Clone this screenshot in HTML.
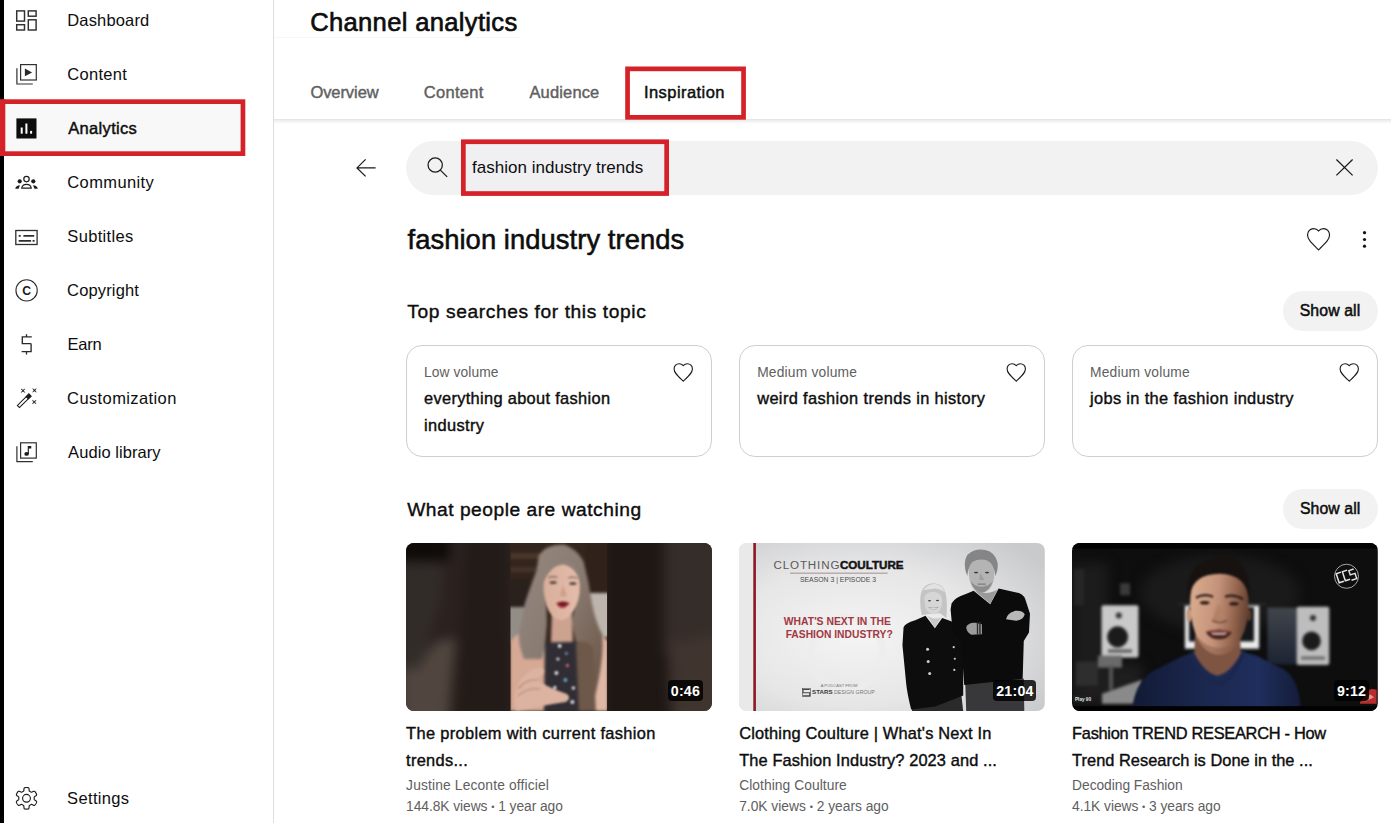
<!DOCTYPE html>
<html lang="en">
<head>
<meta charset="utf-8">
<title>Channel analytics</title>
<style>
html,body{margin:0;padding:0;}
body{width:1391px;height:823px;position:relative;overflow:hidden;background:#fff;
 font-family:"Liberation Sans",sans-serif;color:#0d0d0d;}
.t{position:absolute;line-height:1;white-space:pre;}
.abs{position:absolute;}
.redbox{position:absolute;box-sizing:border-box;border:4.6px solid #d52128;}
.card{position:absolute;box-sizing:border-box;top:345px;width:306px;height:112px;border:1px solid #cfcfcf;border-radius:16px;background:#fff;}
.pill{position:absolute;background:#f2f2f2;border-radius:20px;}
.thumb{position:absolute;top:542.6px;width:305.8px;height:168px;border-radius:8px;overflow:hidden;}
.thumb svg{display:block;width:100%;height:100%;}
.badge{position:absolute;box-sizing:border-box;height:21.3px;border-radius:4px;background:rgba(0,0,0,.82);color:#fff;font-weight:700;font-size:14.2px;letter-spacing:.2px;line-height:1;}
.badge b{position:absolute;top:3.7px;font-weight:700;white-space:pre;}
svg{overflow:visible;}
</style>
</head>
<body>
<!-- left black strip -->
<div class="abs" style="left:0;top:0;width:4px;height:823px;background:#000"></div>
<!-- sidebar divider -->
<div class="abs" style="left:273px;top:0;width:1px;height:823px;background:#dedede"></div>
<!-- selected row background -->
<div class="abs" style="left:4px;top:101px;width:240px;height:54px;background:#f8f8f8"></div>
<!-- header faint line -->
<div class="abs" style="left:274px;top:37px;width:246px;height:1px;background:#f6f6f6"></div>
<!-- tab bar shadow -->
<div class="abs" style="left:274px;top:119px;width:1117px;height:5px;background:linear-gradient(#e2e2e2,#f3f3f3 45%,#fff)"></div>

<!-- search pill -->
<div class="abs" style="left:406px;top:141px;width:972px;height:54px;border-radius:27px;background:#f2f2f2"></div>

<!-- red annotation boxes: drawn in the svg overlay below -->

<!-- show all pills -->
<div class="pill" style="left:1283.3px;top:291px;width:95.2px;height:39.7px"></div>
<div class="pill" style="left:1283.3px;top:489.3px;width:95.2px;height:39.7px"></div>

<!-- cards -->
<div class="card" style="left:406px"></div>
<div class="card" style="left:739.2px"></div>
<div class="card" style="left:1072px"></div>

<!-- all icons in one overlay svg -->
<svg class="abs" style="left:0;top:0" width="1391" height="823" viewBox="0 0 1391 823" fill="none" stroke="#303030" stroke-width="1.45">
 <!-- red annotation boxes -->
 <g stroke="#d52128" stroke-width="4.7" fill="none">
  <rect x="2.35" y="101.65" width="240.6" height="52"/>
  <rect x="0" y="99.3" width="5.3" height="56.7" fill="#d52128" stroke="none"/>
  <rect x="627.55" y="68.85" width="116" height="48.5"/>
  <rect x="463.35" y="141.75" width="203.3" height="51.8" fill="#f0f0f2"/>
 </g>
 <!-- dashboard -->
 <g>
  <rect x="16.7" y="10.9" width="7.8" height="10.2"/>
  <rect x="16.7" y="24.7" width="7.8" height="5.3"/>
  <rect x="28.3" y="10.9" width="7.8" height="5.3"/>
  <rect x="28.3" y="19.8" width="7.8" height="10.2"/>
 </g>
 <!-- content -->
 <g stroke-width="1.2">
  <rect x="20.6" y="64.6" width="15.7" height="15.4"/>
  <path d="M16.9 68.2V84H32.8"/>
  <path d="M24.9 68.6L32.1 72.4L24.9 76.2Z" fill="#2a2a2a" stroke="none"/>
 </g>
 <!-- analytics -->
 <g stroke="none">
  <rect x="16.4" y="118.4" width="20.1" height="20.1" fill="#0d0d0d"/>
  <rect x="20.7" y="127.5" width="2" height="6.2" fill="#fff"/>
  <rect x="25.4" y="123.5" width="2" height="10.2" fill="#fff"/>
  <rect x="30.1" y="130.9" width="2" height="2.8" fill="#fff"/>
 </g>
 <!-- community -->
 <g stroke="#1c1c1c" stroke-width="1.2">
  <circle cx="26.5" cy="179.1" r="2.7"/>
  <path d="M21.7 188.2C22.2 185.6 24 184.4 26.5 184.4C29 184.4 30.8 185.6 31.3 188.2Z" stroke-linejoin="round"/>
  <circle cx="19.7" cy="181.3" r="2.1" fill="#1c1c1c" stroke="none"/>
  <circle cx="33.3" cy="181.3" r="2.1" fill="#1c1c1c" stroke="none"/>
  <path d="M15.2 188.8C15.6 186.6 17.4 185.3 19.9 185.2L18.6 188.8Z" fill="#1c1c1c" stroke="none"/>
  <path d="M37.8 188.8C37.4 186.6 35.6 185.3 33.1 185.2L34.4 188.8Z" fill="#1c1c1c" stroke="none"/>
 </g>
 <!-- subtitles -->
 <g stroke="#2e2e2e">
  <rect x="15.8" y="230.5" width="21.3" height="14" stroke-width="1.3"/>
  <path d="M18.7 235.8H20.7M23.4 235.8H34.2M18.7 240.9H31.1M32.6 240.9H34.6" stroke-width="1.7"/>
 </g>
 <!-- copyright -->
 <g stroke="#2a2a2a" stroke-width="1.1">
  <circle cx="26.6" cy="290.4" r="10.65"/>
  <text x="26.6" y="294.75" text-anchor="middle" font-family="Liberation Sans, sans-serif" font-weight="700" font-size="12.2" fill="#1a1a1a" stroke="none">C</text>
 </g>
 <!-- earn -->
 <g stroke="#2a2a2a" stroke-width="1.35">
  <path d="M31.8 336.9H22.3V343.6H30.3Q31.1 343.6 31.1 344.4V351.6H21.6M26.5 334.2V336.9M26.5 351.6V354.6"/>
 </g>
 <!-- customization -->
 <g stroke="#1c1c1c" stroke-width="1.05">
  <g transform="translate(18.75 406.1) rotate(-44.6)">
   <rect x="-0.5" y="-1.5" width="16.2" height="3"/>
   <rect x="11.9" y="-1.5" width="3.8" height="3" fill="#1c1c1c"/>
  </g>
  <g fill="#1c1c1c" stroke="#1c1c1c" stroke-width="0.5" stroke-linejoin="round">
   <path d="M24.77 392.47L23.00 391.25L21.23 392.47L22.45 390.70L21.23 388.93L23.00 390.15L24.77 388.93L23.55 390.70Z"/>
   <path d="M36.27 392.17L34.50 390.95L32.73 392.17L33.95 390.40L32.73 388.63L34.50 389.85L36.27 388.63L35.05 390.40Z"/>
   <path d="M35.97 403.77L34.20 402.55L32.43 403.77L33.65 402.00L32.43 400.23L34.20 401.45L35.97 400.23L34.75 402.00Z"/>
  </g>
 </g>
 <!-- audio library -->
 <g stroke-width="1.2">
  <rect x="20.6" y="442.8" width="15.7" height="15.3"/>
  <path d="M16.9 446.3V461.7H32.8"/>
  <ellipse cx="26.6" cy="453.9" rx="2.3" ry="1.95" fill="#1c1c1c" stroke="none"/>
  <path d="M28.3 454V446.5H30.7V447.9H28.3" fill="#1c1c1c" stroke="#1c1c1c" stroke-width="1.1" stroke-linejoin="miter"/>
 </g>
 <!-- settings -->
 <g stroke="#1e1e1e" stroke-width="1.15" stroke-linejoin="round">
  <path d="M34.21 798.30 L34.20 798.03 L34.20 797.76 L34.19 797.49 L34.21 797.22 L34.33 796.92 L34.73 796.55 L35.55 796.04 L36.31 795.49 L36.60 795.02 L36.60 794.62 L36.50 794.26 L36.36 793.91 L36.21 793.57 L36.04 793.23 L35.86 792.90 L35.66 792.58 L35.45 792.26 L35.23 791.95 L35.00 791.66 L34.73 791.39 L34.39 791.20 L33.84 791.21 L32.98 791.59 L32.13 792.05 L31.61 792.21 L31.29 792.17 L31.04 792.04 L30.81 791.90 L30.58 791.76 L30.35 791.63 L30.12 791.49 L29.88 791.37 L29.64 791.24 L29.42 791.08 L29.22 790.83 L29.10 790.30 L29.07 789.33 L28.97 788.40 L28.71 787.91 L28.37 787.72 L28.00 787.62 L27.63 787.56 L27.25 787.53 L26.88 787.50 L26.50 787.50 L26.12 787.50 L25.75 787.53 L25.37 787.56 L25.00 787.62 L24.63 787.72 L24.29 787.91 L24.03 788.40 L23.93 789.33 L23.90 790.30 L23.78 790.83 L23.58 791.08 L23.36 791.24 L23.12 791.37 L22.88 791.49 L22.65 791.63 L22.42 791.76 L22.19 791.90 L21.96 792.04 L21.71 792.17 L21.39 792.21 L20.87 792.05 L20.02 791.59 L19.16 791.21 L18.61 791.20 L18.27 791.39 L18.00 791.66 L17.77 791.95 L17.55 792.26 L17.34 792.58 L17.14 792.90 L16.96 793.23 L16.79 793.57 L16.64 793.91 L16.50 794.26 L16.40 794.62 L16.40 795.02 L16.69 795.49 L17.45 796.04 L18.27 796.55 L18.67 796.92 L18.79 797.22 L18.81 797.49 L18.80 797.76 L18.80 798.03 L18.79 798.30 L18.80 798.57 L18.80 798.84 L18.81 799.11 L18.79 799.38 L18.67 799.68 L18.27 800.05 L17.45 800.56 L16.69 801.11 L16.40 801.58 L16.40 801.98 L16.50 802.34 L16.64 802.69 L16.79 803.03 L16.96 803.37 L17.14 803.70 L17.34 804.02 L17.55 804.34 L17.77 804.65 L18.00 804.94 L18.27 805.21 L18.61 805.40 L19.16 805.39 L20.02 805.01 L20.87 804.55 L21.39 804.39 L21.71 804.43 L21.96 804.56 L22.19 804.70 L22.42 804.84 L22.65 804.97 L22.88 805.11 L23.12 805.23 L23.36 805.36 L23.58 805.52 L23.78 805.77 L23.90 806.30 L23.93 807.27 L24.03 808.20 L24.29 808.69 L24.63 808.88 L25.00 808.98 L25.37 809.04 L25.75 809.07 L26.12 809.10 L26.50 809.10 L26.88 809.10 L27.25 809.07 L27.63 809.04 L28.00 808.98 L28.37 808.88 L28.71 808.69 L28.97 808.20 L29.07 807.27 L29.10 806.30 L29.22 805.77 L29.42 805.52 L29.64 805.36 L29.88 805.23 L30.12 805.11 L30.35 804.97 L30.58 804.84 L30.81 804.70 L31.04 804.56 L31.29 804.43 L31.61 804.39 L32.13 804.55 L32.98 805.01 L33.84 805.39 L34.39 805.40 L34.73 805.21 L35.00 804.94 L35.23 804.65 L35.45 804.34 L35.66 804.02 L35.86 803.70 L36.04 803.37 L36.21 803.03 L36.36 802.69 L36.50 802.34 L36.60 801.98 L36.60 801.58 L36.31 801.11 L35.55 800.56 L34.73 800.05 L34.33 799.68 L34.21 799.38 L34.19 799.11 L34.20 798.84 L34.20 798.57Z"/>
  <circle cx="26.5" cy="798.3" r="3.9"/>
 </g>
 <!-- back arrow -->
 <path d="M375.6 167.9H356.6M365.6 159.4L357 167.9L365.6 176.4" stroke="#1a1a1a" stroke-width="1.25"/>
 <!-- search icon -->
 <g stroke="#1a1a1a" stroke-width="1.25">
  <circle cx="435.2" cy="165" r="7.15"/>
  <path d="M440.3 170.1L447.2 176.9"/>
 </g>
 <!-- clear X -->
 <path d="M1336.4 159.5L1352.6 175.4M1352.6 159.5L1336.4 175.4" stroke="#1a1a1a" stroke-width="1.25"/>
 <!-- big heart -->
 <g stroke="#1a1a1a" stroke-width="1.15">
  <path transform="translate(1307.55 228.55) scale(1.1 1.16) translate(-2 -3)" vector-effect="non-scaling-stroke" d="M12 21.35l-1.45-1.32C5.4 15.36 2 12.28 2 8.5 2 5.42 4.42 3 7.5 3c1.74 0 3.41.81 4.5 2.09C13.09 3.81 14.76 3 16.5 3 19.58 3 22 5.42 22 8.5c0 3.78-3.4 6.86-8.55 11.54L12 21.35z"/>
 </g>
 <!-- kebab -->
 <g fill="#111" stroke="none">
  <circle cx="1364.5" cy="232.7" r="1.6"/><circle cx="1364.5" cy="239.5" r="1.6"/><circle cx="1364.5" cy="246.2" r="1.6"/>
 </g>
 <!-- card hearts -->
 <g stroke="#1a1a1a" stroke-width="1.1">
  <path id="h" transform="translate(674.1 363.7) scale(0.915 0.95) translate(-2 -3)" vector-effect="non-scaling-stroke" d="M12 21.35l-1.45-1.32C5.4 15.36 2 12.28 2 8.5 2 5.42 4.42 3 7.5 3c1.74 0 3.41.81 4.5 2.09C13.09 3.81 14.76 3 16.5 3 19.58 3 22 5.42 22 8.5c0 3.78-3.4 6.86-8.55 11.54L12 21.35z"/>
  <path transform="translate(1007.1 363.7) scale(0.915 0.95) translate(-2 -3)" vector-effect="non-scaling-stroke" d="M12 21.35l-1.45-1.32C5.4 15.36 2 12.28 2 8.5 2 5.42 4.42 3 7.5 3c1.74 0 3.41.81 4.5 2.09C13.09 3.81 14.76 3 16.5 3 19.58 3 22 5.42 22 8.5c0 3.78-3.4 6.86-8.55 11.54L12 21.35z"/>
  <path transform="translate(1340.1 363.7) scale(0.915 0.95) translate(-2 -3)" vector-effect="non-scaling-stroke" d="M12 21.35l-1.45-1.32C5.4 15.36 2 12.28 2 8.5 2 5.42 4.42 3 7.5 3c1.74 0 3.41.81 4.5 2.09C13.09 3.81 14.76 3 16.5 3 19.58 3 22 5.42 22 8.5c0 3.78-3.4 6.86-8.55 11.54L12 21.35z"/>
 </g>
</svg>

<!-- thumbnails -->
<div class="thumb" style="left:406.1px"><svg viewBox="0 0 306 168" preserveAspectRatio="none">
<defs>
 <filter color-interpolation-filters="sRGB" id="b6" x="-20%" y="-20%" width="140%" height="140%"><feGaussianBlur stdDeviation="6"/></filter>
 <filter color-interpolation-filters="sRGB" id="b3" x="-20%" y="-20%" width="140%" height="140%"><feGaussianBlur stdDeviation="1.6"/></filter>
 <filter color-interpolation-filters="sRGB" id="b1" x="-20%" y="-20%" width="140%" height="140%"><feGaussianBlur stdDeviation="0.8"/></filter>
 <clipPath id="cp1"><rect x="104.6" y="0" width="96.6" height="168"/></clipPath>
 <linearGradient id="hairg" x1="0" y1="0" x2="1" y2="1"><stop offset="0" stop-color="#958880"/><stop offset="0.45" stop-color="#8a7b72"/><stop offset="1" stop-color="#66503f"/></linearGradient>
 <linearGradient id="skin1" x1="0" y1="0" x2="1" y2="0"><stop offset="0" stop-color="#d9af9b"/><stop offset="1" stop-color="#e3bcab"/></linearGradient>
</defs>
<rect width="306" height="168" fill="#2a2320"/>
<!-- blurred sides -->
<g filter="url(#b6)">
 <rect x="-10" y="20" width="46" height="110" fill="#322c29"/>
 <path d="M43 -10L108 -10L108 180L15 180L23 91L34 60Z" fill="#2b2220"/>
 <path d="M60 -10L100 -10L104 180L50 180Z" fill="#231b18"/>
 <rect x="-12" y="-12" width="56" height="30" fill="#0f0b09"/>
 <path d="M33 98L50 96L46 130L42 180L-5 180L-5 125L12 126L25 105Z" fill="#51463f"/>
 <path d="M200 -10L258 -10L262 180L200 180Z" fill="#1e1714"/>
 <rect x="258" y="-10" width="60" height="120" fill="#342d29"/>
 <path d="M262 100L320 90L320 180L268 180Z" fill="#40342e"/>
</g>
<!-- center panel -->
<g clip-path="url(#cp1)">
 <rect x="104" y="0" width="98" height="168" fill="#35261e"/>
 <g filter="url(#b3)">
  <rect x="100" y="-5" width="105" height="58" fill="#33241c"/>
  <rect x="104" y="10" width="30" height="6" fill="#4a372b"/>
  <rect x="104" y="24" width="28" height="5" fill="#453328"/>
  <rect x="100" y="64" width="24" height="36" fill="#938d88"/>
  <rect x="100" y="36" width="24" height="28" fill="#2a211d"/>
  <rect x="184" y="50" width="22" height="44" fill="#bdb5ae"/>
  <rect x="180" y="-5" width="25" height="52" fill="#30221b"/>
  <!-- arms / shoulders -->
  <path d="M104 168L104 101Q108 92 114 90.5Q124 90 132 96L141 104L138 168Z" fill="#d6a994"/>
  <path d="M202 168L202 98Q198 92 190 93L176 100L180 168Z" fill="#e0b7a5"/>
  <!-- neck -->
  <path d="M146 70L166 70L167 100L145 100Z" fill="#cda390"/>
  <!-- hair mass -->
  <path d="M133 12Q140 1 158 1.5Q171 6 177.5 18Q183 38 186 60Q190 80 196.5 92Q198 112 192 140L186 168L172 168L170 100L166 80L172 40L150 22L140 40L141 80L139 104L136 116L118 116Q112 100 113 90Q116 76 119 60Q125 42 130.5 28Z" fill="url(#hairg)"/>
  <!-- dress -->
  <path d="M139 99.5L172.5 98.8L175 168L138 168Z" fill="#302e34"/>
  <path d="M170 100Q180 96 187 104L190 168L173 168Z" fill="#6d5849"/>
 </g>
 <g filter="url(#b1)">
  <!-- face -->
  <path d="M137.5 40Q138 21 155 20.5Q173 21 174 42Q174.5 58 167 69Q161 77 155.5 77Q149 77 143.5 69Q137 58 137.5 40Z" fill="url(#skin1)"/>
  <path d="M137 42Q138 18 156 17.5Q174 19 174.5 42Q171 24 157 21.5Q143 23 137 42Z" fill="#8f8078"/>
  <ellipse cx="147.2" cy="39.6" rx="3.6" ry="1.5" fill="#5b4a44"/>
  <ellipse cx="167" cy="40.4" rx="3.6" ry="1.5" fill="#5b4a44"/>
  <path d="M142.5 34.8Q147 32.6 151.5 34.6M162.5 35Q167 33 171.5 35.6" stroke="#7a6257" stroke-width="1.1" fill="none"/>
  <path d="M157 42L154 52.5Q157.5 55 161 52.5Z" fill="#cf9f8c"/>
  <path d="M150.3 60Q157 56.5 164 60Q160 65.2 156.5 65Q152.5 65 150.3 60Z" fill="#a62d3c"/>
  <ellipse cx="157" cy="61" rx="4" ry="1.3" fill="#4c1a1f"/>
  <!-- hand -->
  <path d="M108.5 156Q109 140 120 131Q127 124 134 124.5Q140 126 137 131L130 137Q146 146 161 151Q166 155 160 159Q140 162 126 165L110 168Z" fill="#dbb3a0"/>
  <path d="M112 146Q120 136 131 137M112 153Q122 144 134 146" stroke="#bb907d" stroke-width="1.3" fill="none"/>
  <!-- stars on dress -->
  <g fill="#dadae2">
   <circle cx="153.8" cy="103" r="2"/><circle cx="152" cy="116" r="1.6"/><circle cx="150.5" cy="130" r="2"/>
   <circle cx="149" cy="144.5" r="1.7"/><circle cx="167.5" cy="145" r="1.8"/><circle cx="166.5" cy="159" r="2"/>
  </g>
  <circle cx="161.5" cy="122.5" r="1.8" fill="#c0607a"/><circle cx="159.5" cy="137" r="1.9" fill="#6aa0c8"/><circle cx="160.5" cy="110.5" r="1.4" fill="#7a8ec0"/>
 </g>
</g>
</svg></div>
<div class="thumb" style="left:739.2px"><svg viewBox="0 0 305.5 167.5" preserveAspectRatio="none" font-family="Liberation Sans, sans-serif">
<defs>
 <radialGradient id="bg2" cx="0.38" cy="0.55" r="0.75"><stop offset="0" stop-color="#f4f4f4"/><stop offset="0.55" stop-color="#e6e6e7"/><stop offset="1" stop-color="#c9cacc"/></radialGradient>
 <filter color-interpolation-filters="sRGB" id="c1" x="-20%" y="-20%" width="140%" height="140%"><feGaussianBlur stdDeviation="0.7"/></filter>
 <filter color-interpolation-filters="sRGB" id="c2" x="-20%" y="-20%" width="140%" height="140%"><feGaussianBlur stdDeviation="1.6"/></filter>
</defs>
<rect width="305.5" height="167.5" fill="url(#bg2)"/>
<rect x="0" y="0" width="14.5" height="167.5" fill="#e9e9ea"/>
<rect x="14.3" y="0" width="2.6" height="167.5" fill="#8a1b25"/>
<circle cx="108" cy="110" r="36" fill="none" stroke="#ececec" stroke-width="7" opacity=".8"/>
<text x="34.4" y="25.6" font-size="11.6" fill="#5a5a5a" textLength="66" lengthAdjust="spacing">CLOTHING</text>
<text x="100.8" y="25.6" font-size="11.6" font-weight="700" fill="#151515" textLength="63.6" lengthAdjust="spacing" stroke="#151515" stroke-width=".5">COULTURE</text>
<rect x="51" y="29.6" width="97.5" height="0.9" fill="#a08388"/>
<text x="60.9" y="39.2" font-size="7.4" fill="#4a4a4a" textLength="76" lengthAdjust="spacingAndGlyphs">SEASON 3 | EPISODE 3</text>
<text x="44.8" y="81.7" font-size="11.1" font-weight="700" fill="#a23842" textLength="107" lengthAdjust="spacingAndGlyphs">WHAT'S NEXT IN THE</text>
<text x="46.6" y="94.4" font-size="11.1" font-weight="700" fill="#a23842" textLength="107" lengthAdjust="spacingAndGlyphs">FASHION INDUSTRY?</text>
<text x="81.6" y="143.4" font-size="3.7" fill="#777" textLength="36.8" lengthAdjust="spacingAndGlyphs">A PODCAST FROM</text>
<g fill="none" stroke="#444" stroke-width="1"><path d="M70.6 146H64V149.2H70.6V152.4H64"/><rect x="63.3" y="145.2" width="8" height="8" stroke-width=".6"/></g>
<text x="73" y="150.9" font-size="5" font-weight="700" fill="#3a3a3a" textLength="20.5" lengthAdjust="spacingAndGlyphs">STARS</text>
<text x="95" y="150.9" font-size="5" fill="#777" textLength="40.6" lengthAdjust="spacingAndGlyphs">DESIGN GROUP</text>
<!-- people -->
<g filter="url(#c1)">
 <!-- man pants -->
 <path d="M226 139L284.5 135L285 168L227 168Z" fill="#38383a"/>
 <!-- woman pants -->
 <path d="M172 160L222 150L224 168L173 168Z" fill="#2a2a2b"/>
 <!-- woman jacket -->
 <path d="M164.4 84Q166 80 176 77L186.3 72.6L195.7 85L203 74.7L212 78L224 90L224 152L196 163L172 166Q168 150 167 140L163.3 102Z" fill="#0d0d0e"/>
 <!-- man sweater -->
 <path d="M212.4 60Q216 54 226 51L234.4 47.5L251 61L259.4 45.4L276 49Q284 50 286 56L290.7 70.5L289.7 89.3L284.5 97.7L283.4 135.3L225 141.5L221.8 97.7L213.5 89.3L211.4 66.3Z" fill="#0b0b0c"/>
 <!-- woman hair -->
 <path d="M182.5 72Q179.5 56 182.5 48Q186 40 195 40.2Q204 41 206.5 50Q208.5 60 207.2 74.7L201 70L188 71Z" fill="#c4c4c4"/>
 <path d="M184 47Q189 40.5 196 41Q203 42 205.5 49Q200 45 194 45.5Q188 46 184 47Z" fill="#e2e2e2"/>
 <!-- woman face -->
 <path d="M185 56Q185.5 49 194 48.6Q202.5 49 203 57Q203 65 199 69Q196 71.5 193.5 71Q189.5 70 186.5 65Z" fill="#d6d6d6"/>
 <path d="M189.5 64.2Q194 68.2 199 64Q194 65.6 189.5 64.2Z" fill="#fff" stroke="#8a8a8a" stroke-width=".5"/>
 <ellipse cx="190.3" cy="57.6" rx="1.6" ry=".7" fill="#4a4a4a"/><ellipse cx="198.3" cy="57.4" rx="1.6" ry=".7" fill="#4a4a4a"/>
 <path d="M188 72.5L195.7 84.5L202 74Q195 77 188 72.5Z" fill="#c9c9c9"/>
 <!-- man head -->
 <path d="M229.5 30Q229 16 241 14.5Q254 15 255 30Q255.5 40 250 46Q246 50 242 49.6Q236 49 232.5 43Q229.5 37 229.5 30Z" fill="#b4b4b4"/>
 <path d="M228 33Q223 20 228 12Q236 5 246 7Q256 9 258.4 20Q259 27 256 33Q255 21 248 17.5Q240 15 233 19Q229 24 228 33Z" fill="#858585"/>
 <path d="M231.5 38Q234 48 242 49.6Q250 49 253.5 38Q250 43.5 242 43.5Q235 43.5 231.5 38Z" fill="#8d8d8d"/>
 <ellipse cx="236.8" cy="29.5" rx="2.2" ry=".8" fill="#3c3c3c"/><ellipse cx="247.8" cy="29.5" rx="2.2" ry=".8" fill="#3c3c3c"/>
 <path d="M241 30L240 37H245Z" fill="#9f9f9f"/>
 <path d="M238.5 41H246.5" stroke="#5a5a5a" stroke-width=".8"/>
 <path d="M235 47L251 60.5L258.5 46Q248 53 235 47Z" fill="#9a9a9a"/>
 <!-- hands -->
 <path d="M227 84Q229 79 236 79.5L242.7 81L242.7 91L232 91.4Q227.5 89 227 84Z" fill="#9c9c9c"/>
 <rect x="237.6" y="78.5" width="1.3" height="13" fill="#2a2a2a"/><rect x="240" y="78.5" width="1.4" height="13" fill="#2a2a2a"/>
 <path d="M266.7 76Q268 70 276 67.6Q283 67 285.5 71Q284 76.5 277 77.5Z" fill="#b8b8b8"/>
 <!-- buttons -->
 <g fill="#cdcdcd"><circle cx="188.4" cy="106" r="1.5"/><circle cx="189" cy="118.1" r="1.5"/><circle cx="190.5" cy="130.2" r="1.5"/><circle cx="214.5" cy="103.9" r="1.1"/><circle cx="215.6" cy="115.4" r="1.1"/><circle cx="215.1" cy="126.5" r="1.1"/></g>
</g>
</svg></div>
<div class="thumb" style="left:1072.1px"><svg viewBox="0 0 305.8 167.2" preserveAspectRatio="none" font-family="Liberation Sans, sans-serif">
<defs>
 <filter color-interpolation-filters="sRGB" id="d1" x="-20%" y="-20%" width="140%" height="140%"><feGaussianBlur stdDeviation="0.9"/></filter>
 <filter color-interpolation-filters="sRGB" id="d2" x="-20%" y="-20%" width="140%" height="140%"><feGaussianBlur stdDeviation="1.8"/></filter>
 <filter color-interpolation-filters="sRGB" id="d3" x="-30%" y="-30%" width="160%" height="160%"><feGaussianBlur stdDeviation="6"/></filter>
 <linearGradient id="face3" x1="0" y1="0" x2="1" y2="0.15"><stop offset="0" stop-color="#dcae90"/><stop offset="0.5" stop-color="#c4927a"/><stop offset="0.8" stop-color="#96664f"/><stop offset="1" stop-color="#6a4636"/></linearGradient>
 <linearGradient id="shirt3" x1="0" y1="0" x2="1" y2="0"><stop offset="0" stop-color="#121a35"/><stop offset="0.45" stop-color="#1b2850"/><stop offset="0.75" stop-color="#1f2e5c"/><stop offset="1" stop-color="#141c38"/></linearGradient>
 <linearGradient id="pan3" x1="0" y1="0" x2="0" y2="1"><stop offset="0" stop-color="#41454c"/><stop offset="1" stop-color="#1c2332"/></linearGradient>
</defs>
<rect width="305.8" height="167.2" fill="#0e0e0e"/>
<g filter="url(#d3)">
 <rect x="0" y="20" width="36" height="120" fill="#1c1c1c"/>
 <ellipse cx="148" cy="50" rx="80" ry="38" fill="#1a1a1a"/>
 <rect x="0" y="120" width="70" height="40" fill="#1e1e1e"/>
</g>
<g filter="url(#d2)">
 <!-- left speaker -->
 <rect x="29.5" y="62" width="37" height="52" rx="2" fill="#c9c9c9"/>
 <circle cx="45.6" cy="93.4" r="10.5" fill="#1b1b1b"/>
 <circle cx="46.8" cy="72.1" r="3" fill="#333"/>
 <rect x="36" y="106" width="24" height="3" fill="#555"/>
 <!-- right panel + speaker -->
 <rect x="195.4" y="64.3" width="30" height="56.5" fill="url(#pan3)"/>
 <rect x="224.7" y="63.5" width="32.6" height="58" rx="2" fill="#bdbdbd"/>
 <circle cx="239.5" cy="97.5" r="9.3" fill="#1b1b1b"/>
 <circle cx="241" cy="74.6" r="2.9" fill="#2c2c2c"/>
 <rect x="229" y="113" width="24" height="3" fill="#666"/>
 <!-- monitor -->
 <rect x="112.9" y="62.2" width="74.2" height="43" fill="#ececec"/>
 <rect x="117" y="64" width="65" height="34" fill="#14161a"/>
 <rect x="106" y="60" width="88" height="2" fill="#2a2a2a"/>
 <!-- lamp / desk -->
 <rect x="26" y="112" width="24" height="12" fill="#6a6a6a"/>
 <rect x="37" y="122" width="4" height="24" fill="#555"/>
 <path d="M30 150L70 136L70 160L30 160Z" fill="#8a8a8a"/>
 <rect x="4" y="118" width="22" height="24" fill="#2e2e2e"/>
 <rect x="48" y="40" width="10" height="12" fill="#3a3a3a"/>
 <rect x="2" y="26" width="10" height="36" fill="#262626"/>
</g>
<g filter="url(#d1)">
 <!-- shirt -->
 <path d="M60 168Q62 140 80 128L109.7 113L124 108Q146 122 168 108L184 112L212 126Q228 136 229 168Z" fill="url(#shirt3)"/>
 <!-- neck -->
  <path d="M123 92L168 92L169 110Q158 130 145.3 132Q133 130 122.3 110Z" fill="#7e5442"/>
 <path d="M121 107Q133 136 145.3 137.5Q158 136 170.5 106L174 109Q160 142 145.3 143Q131 142 118 110Z" fill="#1b274e"/>
 <!-- hair -->
 <path d="M117 56Q112 28 132 19Q146 12 162 17Q180 24 177.5 58Q172 36 148 34Q124 36 117 56Z" fill="#17120f"/>
 <ellipse cx="152" cy="22" rx="17" ry="8" fill="#17120f"/>
 <!-- face -->
 <path d="M118.5 52Q120 31 148 30.5Q175 31.5 176.5 56Q178 78 169 95Q160 111.5 146.5 111.3Q132 110 124 92Q116.5 72 118.5 52Z" fill="url(#face3)"/>
 <!-- ears -->
 <ellipse cx="117" cy="72" rx="2.6" ry="6.5" fill="#c99a7c"/>
 <ellipse cx="177.5" cy="72" rx="2" ry="6" fill="#5d3c2e"/>
 <!-- brows, eyes -->
 <path d="M124 54.5Q132 50 141 53.5M153 53.5Q162 50.5 171 56" stroke="#2a1d17" stroke-width="2.2" fill="none"/>
 <ellipse cx="132.7" cy="59.4" rx="4.8" ry="1.8" fill="#2b1e19"/><ellipse cx="162" cy="60.4" rx="4.8" ry="1.8" fill="#2b1e19"/>
 <!-- nose -->
 <path d="M146 60L140.5 76Q147 80.5 154.5 76Z" fill="#b38166"/>
 <path d="M140 77Q147.3 81.5 155 77" stroke="#6e4a3a" stroke-width="1.3" fill="none"/>
 <!-- mouth -->
 <path d="M133.8 88.5Q147 83.5 160 88.5Q156 96 147 96Q138 96 133.8 88.5Z" fill="#4a2420"/>
 <path d="M133.8 88.5Q140 85 147 87Q154 85 160 88.5Q147 89.5 133.8 88.5Z" fill="#8a4a40"/>
 <path d="M139 89.3Q147 90 155 89.3L153.5 91Q147 91.6 140.5 91Z" fill="#d8d0c8"/>
 <!-- stubble / jaw shadow -->
 <path d="M124 92Q132 110 146.5 111.3Q160 111.5 169 95Q160 104 146.5 104.5Q134 104 124 92Z" fill="#8a5f4a" opacity=".55"/>
</g>
<!-- logo -->
<g stroke="#e4e4e4" fill="none">
 <circle cx="274.5" cy="33.1" r="12" stroke-width=".7"/>
 <path d="M270.5 27.5H265.5V37H270.5M277 27.5H272V37H277M283.5 28.5H278.5V33H283.5V38.5H278" stroke-width="1.5" transform="rotate(-18 274.5 33.1)"/>
</g>
<!-- letterbox bars + label -->
<rect x="0" y="0" width="305.8" height="5.6" fill="#020202"/>
<rect x="0" y="162.4" width="305.8" height="5" fill="#020202"/>
<rect x="1.2" y="151.3" width="19.6" height="7.6" rx="1.2" fill="#1e1e1e"/>
<text x="3" y="157.1" font-size="4.7" font-weight="700" fill="#e0e0e0" textLength="16" lengthAdjust="spacingAndGlyphs">Play 90</text>
<!-- red corner -->
<path d="M288 158.5L296.5 147Q298 145 300.5 145.4L304.6 146V160H288Z" fill="#b92c2c"/>
<path d="M293 158L298 150.5L302 153.5Z" fill="#e8b0b0" opacity=".8"/>
</svg></div>

<!-- duration badges -->
<div class="badge" style="left:667.5px;top:680.1px;width:35.3px"><b style="left:3.3px">0:46</b></div>
<div class="badge" style="left:992.9px;top:680.2px;width:42.9px"><b style="left:3.4px">21:04</b></div>
<div class="badge" style="left:1333.6px;top:680.2px;width:35.3px"><b style="left:3.4px">9:12</b></div>

<span class="t" style="left:67.30px;top:11.93px;font-size:16.5px;letter-spacing:0.150px;color:#0d0d0d;">Dashboard</span>
<span class="t" style="left:67.30px;top:65.93px;font-size:16.5px;letter-spacing:0.283px;color:#0d0d0d;">Content</span>
<span class="t" style="left:68.30px;top:119.93px;font-size:16.5px;letter-spacing:0.312px;color:#0d0d0d;-webkit-text-stroke:0.45px #0d0d0d;">Analytics</span>
<span class="t" style="left:67.30px;top:173.93px;font-size:16.5px;letter-spacing:0.375px;color:#0d0d0d;">Community</span>
<span class="t" style="left:67.30px;top:227.93px;font-size:16.5px;letter-spacing:0.338px;color:#0d0d0d;">Subtitles</span>
<span class="t" style="left:67.10px;top:281.93px;font-size:16.5px;letter-spacing:0.150px;color:#0d0d0d;">Copyright</span>
<span class="t" style="left:67.60px;top:335.93px;font-size:16.5px;letter-spacing:-0.233px;color:#0d0d0d;">Earn</span>
<span class="t" style="left:67.10px;top:389.93px;font-size:16.5px;letter-spacing:0.392px;color:#0d0d0d;">Customization</span>
<span class="t" style="left:68.10px;top:443.93px;font-size:16.5px;letter-spacing:0.067px;color:#0d0d0d;">Audio library</span>
<span class="t" style="left:67.10px;top:789.93px;font-size:16.5px;letter-spacing:0.343px;color:#0d0d0d;">Settings</span>
<span class="t" style="left:310.20px;top:10.03px;font-size:25.6px;letter-spacing:0.312px;color:#0d0d0d;-webkit-text-stroke:0.65px #0d0d0d;">Channel analytics</span>
<span class="t" style="left:310.40px;top:84.13px;font-size:16.5px;letter-spacing:-0.071px;color:#606060;-webkit-text-stroke:0.42px #606060;">Overview</span>
<span class="t" style="left:423.70px;top:84.13px;font-size:16.5px;letter-spacing:0.317px;color:#606060;-webkit-text-stroke:0.42px #606060;">Content</span>
<span class="t" style="left:529.40px;top:84.13px;font-size:16.5px;letter-spacing:0.157px;color:#606060;-webkit-text-stroke:0.42px #606060;">Audience</span>
<span class="t" style="left:643.90px;top:84.13px;font-size:16.5px;letter-spacing:0.450px;color:#0d0d0d;-webkit-text-stroke:0.45px #0d0d0d;">Inspiration</span>
<span class="t" style="left:472.10px;top:158.61px;font-size:17px;letter-spacing:0.005px;color:#0d0d0d;">fashion industry trends</span>
<span class="t" style="left:407.50px;top:225.71px;font-size:27.4px;letter-spacing:0.050px;color:#0d0d0d;-webkit-text-stroke:0.55px #0d0d0d;">fashion industry trends</span>
<span class="t" style="left:407.30px;top:302.35px;font-size:19.2px;letter-spacing:0.600px;color:#0d0d0d;-webkit-text-stroke:0.4px #0d0d0d;">Top searches for this topic</span>
<span class="t" style="left:407.20px;top:500.45px;font-size:19.2px;letter-spacing:0.522px;color:#0d0d0d;-webkit-text-stroke:0.4px #0d0d0d;">What people are watching</span>
<span class="t" style="left:1299.70px;top:302.53px;font-size:15.8px;letter-spacing:0.114px;color:#0d0d0d;-webkit-text-stroke:0.5px #0d0d0d;">Show all</span>
<span class="t" style="left:1299.90px;top:500.53px;font-size:15.8px;letter-spacing:0.100px;color:#0d0d0d;-webkit-text-stroke:0.5px #0d0d0d;">Show all</span>
<span class="t" style="left:424.00px;top:366.22px;font-size:13.8px;letter-spacing:0.089px;color:#606060;">Low volume</span>
<span class="t" style="left:757.20px;top:366.22px;font-size:13.8px;letter-spacing:0.192px;color:#606060;">Medium volume</span>
<span class="t" style="left:1090.00px;top:366.22px;font-size:13.8px;letter-spacing:0.192px;color:#606060;">Medium volume</span>
<span class="t" style="left:424.00px;top:389.92px;font-size:16.4px;letter-spacing:0.322px;color:#0d0d0d;-webkit-text-stroke:0.4px #0d0d0d;">everything about fashion</span>
<span class="t" style="left:424.00px;top:416.92px;font-size:16.4px;letter-spacing:0.371px;color:#0d0d0d;-webkit-text-stroke:0.4px #0d0d0d;">industry</span>
<span class="t" style="left:757.20px;top:389.92px;font-size:16.4px;letter-spacing:0.367px;color:#0d0d0d;-webkit-text-stroke:0.4px #0d0d0d;">weird fashion trends in history</span>
<span class="t" style="left:1090.00px;top:389.92px;font-size:16.4px;letter-spacing:0.348px;color:#0d0d0d;-webkit-text-stroke:0.4px #0d0d0d;">jobs in the fashion industry</span>
<span class="t" style="left:406.10px;top:724.92px;font-size:16.4px;letter-spacing:0.342px;color:#0d0d0d;-webkit-text-stroke:0.4px #0d0d0d;">The problem with current fashion</span>
<span class="t" style="left:406.10px;top:751.82px;font-size:16.4px;letter-spacing:0.300px;color:#0d0d0d;-webkit-text-stroke:0.4px #0d0d0d;">trends...</span>
<span class="t" style="left:406.10px;top:779.12px;font-size:13.8px;letter-spacing:0.148px;color:#606060;">Justine Leconte officiel</span>
<span class="t" style="left:406.10px;top:799.92px;font-size:13.8px;letter-spacing:-0.058px;color:#606060;">144.8K views <span style="font-size:9.2px;vertical-align:1.5px">•</span> 1 year ago</span>
<span class="t" style="left:739.20px;top:724.92px;font-size:16.4px;letter-spacing:0.182px;color:#0d0d0d;-webkit-text-stroke:0.4px #0d0d0d;">Clothing Coulture | What's Next In</span>
<span class="t" style="left:739.20px;top:751.82px;font-size:16.4px;letter-spacing:0.106px;color:#0d0d0d;-webkit-text-stroke:0.4px #0d0d0d;">The Fashion Industry? 2023 and ...</span>
<span class="t" style="left:739.20px;top:779.12px;font-size:13.8px;letter-spacing:0.062px;color:#606060;">Clothing Coulture</span>
<span class="t" style="left:739.20px;top:799.92px;font-size:13.8px;letter-spacing:-0.009px;color:#606060;">7.0K views <span style="font-size:9.2px;vertical-align:1.5px">•</span> 2 years ago</span>
<span class="t" style="left:1072.10px;top:724.92px;font-size:16.4px;letter-spacing:-0.296px;color:#0d0d0d;-webkit-text-stroke:0.4px #0d0d0d;">Fashion TREND RESEARCH - How</span>
<span class="t" style="left:1072.10px;top:751.82px;font-size:16.4px;letter-spacing:0.025px;color:#0d0d0d;-webkit-text-stroke:0.4px #0d0d0d;">Trend Research is Done in the ...</span>
<span class="t" style="left:1072.10px;top:779.12px;font-size:13.8px;letter-spacing:-0.047px;color:#606060;">Decoding Fashion</span>
<span class="t" style="left:1072.10px;top:799.92px;font-size:13.8px;letter-spacing:-0.052px;color:#606060;">4.1K views <span style="font-size:9.2px;vertical-align:1.5px">•</span> 3 years ago</span>
</body>
</html>
